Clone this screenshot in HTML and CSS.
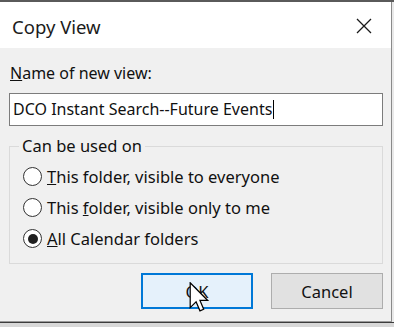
FILE: index.html
```html
<!DOCTYPE html>
<html lang="en">
<head>
    <meta charset="UTF-8">
    <title>Copy View</title>
    <link rel="stylesheet" href="styles.css">
</head>
<body>
    <div class="top-strip"></div>
    <div class="dialog">
        <div class="title-bar">
            <span class="title">Copy View</span>
            <svg class="close-icon" width="16" height="16" viewBox="0 0 16 16">
                <path d="M1 1 L15 15 M15 1 L1 15" stroke="#1a1a1a" stroke-width="1.3" fill="none"/>
            </svg>
        </div>
        <div class="dialog-body">
            <label class="field-label"><u>N</u>ame of new view:</label>
            <div class="text-input">DCO Instant Search--Future Events<span class="caret"></span></div>

            <fieldset class="group-box">
                <legend>Can be used on</legend>
                <div class="radio-row">
                    <span class="radio"></span>
                    <span><u>T</u>his folder, visible to everyone</span>
                </div>
                <div class="radio-row">
                    <span class="radio"></span>
                    <span>This <u>f</u>older, visible only to me</span>
                </div>
                <div class="radio-row">
                    <span class="radio checked"></span>
                    <span><u>A</u>ll Calendar folders</span>
                </div>
            </fieldset>

            <div class="button-row">
                <div class="btn btn-default">
                    OK
                    <svg class="cursor" width="21" height="31" viewBox="0 0 13 20">
                        <path d="M0.5 0.5 L0.5 16.5 L4.3 12.8 L6.8 18.6 L9.2 17.6 L6.8 11.9 L11.8 11.9 Z" fill="#fff" stroke="#000" stroke-width="0.8" stroke-linejoin="miter"/>
                    </svg>
                </div>
                <div class="btn">Cancel</div>
            </div>
        </div>
    </div>
    <div class="bottom-strip"></div>
</body>
</html>
```

FILE: styles.css
```css
* {
    margin: 0;
    padding: 0;
    box-sizing: border-box;
}

body {
    width: 394px;
    height: 327px;
    overflow: hidden;
    background-color: #e9e9e9;
    font-family: 'Noto Sans', 'Open Sans', Arial, sans-serif;
    font-size: 16.5px;
    color: #111;
}

.top-strip {
    height: 2px;
    background-color: #5a5a5a;
}

.dialog {
    width: 392px;
    height: 320px;
    background-color: #f0f0f0;
    border-right: 1px solid #8a8a8a;
    border-bottom: 1px solid #9a9a9a;
}

.title-bar {
    height: 46px;
    background-color: #fff;
    display: flex;
    align-items: center;
    justify-content: space-between;
    padding: 0 19px 0 12px;
}

.title {
    font-size: 18.5px;
    color: #1b1b1b;
    padding-top: 2px;
}

.close-icon {
    margin-top: 2px;
}

.dialog-body {
    padding: 14px 0 0 9px;
}

.field-label {
    display: block;
    padding-left: 1px;
    font-size: 16px;
    line-height: 22px;
    height: 31px;
}

.text-input {
    width: 374px;
    height: 33px;
    background-color: #fff;
    border: 1px solid #7c7c7c;
    padding-left: 3px;
    font-size: 16px;
    line-height: 31px;
    display: flex;
    align-items: center;
}

.caret {
    display: inline-block;
    width: 1px;
    height: 19px;
    background-color: #000;
    margin-left: 1px;
}

.group-box {
    width: 374px;
    height: 127px;
    margin-top: 11px;
    border: 1px solid #dadada;
    padding: 6px 0 0 13px;
}

.group-box legend {
    margin-left: -4px;
    padding: 0 3px 0 3px;
    line-height: 18px;
}

.radio-row {
    display: flex;
    align-items: center;
    gap: 5px;
    height: 31px;
}

.radio {
    width: 19px;
    height: 19px;
    border-radius: 50%;
    border: 1px solid #333;
    background-color: #fff;
    display: flex;
    align-items: center;
    justify-content: center;
}

.radio.checked::after {
    content: '';
    width: 10px;
    height: 10px;
    border-radius: 50%;
    background-color: #1f1f1f;
}

.button-row {
    display: flex;
    gap: 18px;
    padding-left: 132px;
    margin-top: 9px;
}

.btn {
    position: relative;
    width: 112px;
    height: 36px;
    background-color: #e1e1e1;
    border: 1px solid #adadad;
    display: flex;
    align-items: center;
    justify-content: center;
    padding-top: 1px;
}

.btn-default {
    background-color: #e5f1fb;
    border: 2px solid #0078d7;
}

.cursor {
    position: absolute;
    left: 46px;
    top: 7px;
}

.bottom-strip {
    height: 5px;
    background-color: #d8d8d8;
    border-top: 1px solid #3c3c3c;
}
```
